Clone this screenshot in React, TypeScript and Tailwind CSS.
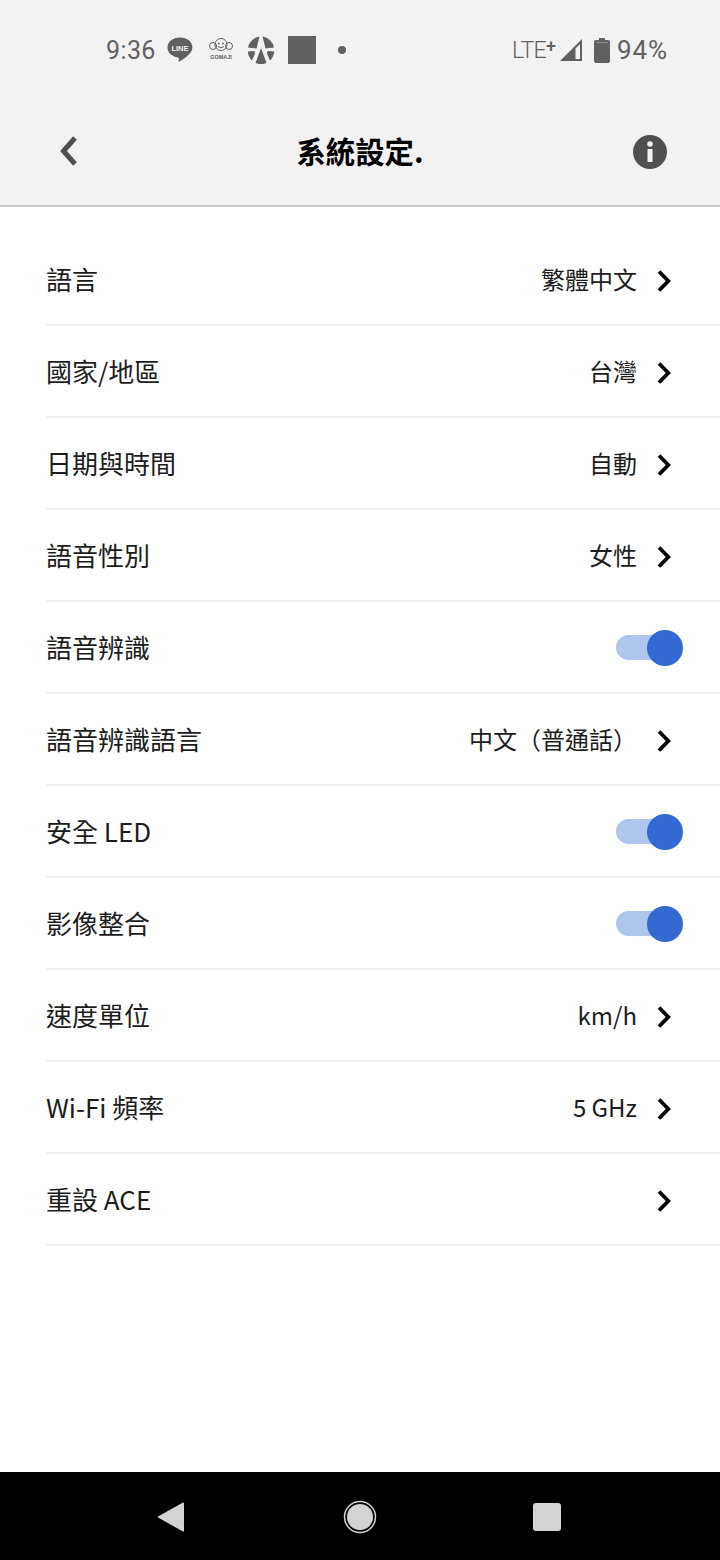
import React from 'react';

const cjk = 'font-["Noto_Sans_CJK_TC",sans-serif]';

type Row = { label: string; value?: string; toggle?: boolean };

const rows: Row[] = [
  { label: '語言', value: '繁體中文' },
  { label: '國家/地區', value: '台灣' },
  { label: '日期與時間', value: '自動' },
  { label: '語音性別', value: '女性' },
  { label: '語音辨識', toggle: true },
  { label: '語音辨識語言', value: '中文（普通話）' },
  { label: '安全 LED', toggle: true },
  { label: '影像整合', toggle: true },
  { label: '速度單位', value: 'km/h' },
  { label: 'Wi-Fi 頻率', value: '5 GHz' },
  { label: '重設 ACE', value: '' },
];

const Chevron = () => (
  <svg width="16" height="24" viewBox="0 0 16 24" className="ml-[19px] shrink-0">
    <path d="M3 2.500 L12.300 12 L3 21.500" fill="none" stroke="#000" strokeWidth="3.800" />
  </svg>
);

const Toggle = () => (
  <div className="relative w-[68px] h-[36px] mr-[37px]">
    <div className="absolute left-[1px] top-[5.5px] w-[59px] h-[25px] rounded-full bg-[#aec6ec]" />
    <div className="absolute right-0 top-0 w-[36px] h-[36px] rounded-full bg-[#3369d1]" />
  </div>
);

const StatusBar = () => (
  <div className='h-[100px] flex items-start pt-[33px] pl-[106px] pr-[52px] justify-between text-[#616161] font-["Roboto",sans-serif]'>
    <div className="flex items-center h-[34px]">
      <span className="text-[25px] leading-none tracking-[0.4px]">9:36</span>
      {/* LINE */}
      <svg width="28" height="28" viewBox="0 0 28 28" className="ml-[10px]">
        <path d="M14 1.5C6.8 1.5 1.5 5.7 1.5 11.5c0 5.2 4.4 9.2 10.5 9.9.8.2 1 .6.8 1.4l-.3 2.2c0 .5.4.9 1 .5 3-1.8 12.9-7.4 12.9-14C26.500 5.700 21.200 1.500 14 1.500Z" fill="#616161" />
        <text x="14" y="14.500" textAnchor="middle" fontSize="7.500" fontWeight="700" fill="#f2f2f2" fontFamily="Liberation Sans">LINE</text>
      </svg>
      {/* GOMAJI */}
      <svg width="26" height="28" viewBox="0 0 26 28" className="ml-[14px]">
        <g fill="none" stroke="#616161" strokeWidth="1">
          <circle cx="13" cy="8.500" r="6" />
          <circle cx="5" cy="10" r="3.500" />
          <circle cx="21" cy="10" r="3.500" />
        </g>
        <circle cx="11" cy="7.500" r="0.900" fill="#616161" />
        <circle cx="15" cy="7.500" r="0.900" fill="#616161" />
        <path d="M10 10.500q3 2.500 6 0" fill="none" stroke="#616161" strokeWidth="1" />
        <text x="13" y="23" textAnchor="middle" fontSize="5.500" fontWeight="700" fill="#616161" fontFamily="Liberation Sans">GOMAJI</text>
      </svg>
      {/* round logo */}
      <svg width="28" height="28" viewBox="0 0 28 28" className="ml-[13px]">
        <path d="M12.500 .6A13.500 13.500 0 0 0 1 11.500L9.500 12.500ZM15.500 .6A13.500 13.500 0 0 1 27 11.500L18.500 12.500ZM.8 15.500 7.500 15 8 17.500 5 24.500A13.500 13.500 0 0 1 .8 15.500ZM27.200 15.500 20.500 15 20 17.500 23 24.500A13.500 13.500 0 0 0 27.200 15.500ZM14 12 8.500 27A13.500 13.500 0 0 0 19.500 27Z" fill="#616161" />
      </svg>
      <div className="ml-[13px] w-[28px] h-[28px] bg-[#616161]" />
      <div className="ml-[22px] w-[8px] h-[8px] rounded-full bg-[#616161]" />
    </div>
    <div className="flex items-center h-[34px]">
      <span className="text-[23px] leading-none tracking-[-0.6px] font-light">LTE</span>
      <span className="text-[18px] leading-none font-medium mb-[8px]">+</span>
      <svg width="24" height="24" viewBox="0 0 24 24" className="ml-[3px]">
        <path d="M1 23 23 1V23ZM16.500 21H21V6L16.500 10.500Z" fill="#616161" fillRule="evenodd" />
      </svg>
      <svg width="16" height="25" viewBox="0 0 16 25" className="ml-[11px]">
        <path d="M5 0h6v2h3a2 2 0 0 1 2 2v19a2 2 0 0 1-2 2H2a2 2 0 0 1-2-2V4a2 2 0 0 1 2-2h3Z" fill="#616161" />
        <rect x="2" y="4" width="12" height="1" fill="#8a8a8a" />
      </svg>
      <span className="ml-[7px] text-[26px] leading-none tracking-[0.9px]">94%</span>
    </div>
  </div>
);

const Header = () => (
  <div className="relative h-[107px] bg-[#f2f2f2] border-b-2 border-[#c9c9c9] flex justify-center pt-[28px]">
    <svg width="22" height="30" viewBox="0 0 22 30" className="absolute left-[57px] top-[36px]">
      <path d="M18 2 6.500 15 18 28" fill="none" stroke="#4f4f4f" strokeWidth="5" />
    </svg>
    <span className="text-[29.4px] leading-[44px] font-bold text-black">系統設定.</span>
    <svg width="34" height="34" viewBox="0 0 34 34" className="absolute left-[633px] top-[35px]">
      <circle cx="17" cy="17" r="17" fill="#505050" />
      <rect x="14.500" y="14" width="5" height="13" fill="#f2f2f2" />
      <circle cx="17" cy="9" r="2.800" fill="#f2f2f2" />
    </svg>
  </div>
);

const SettingRow = ({ row }: { row: Row }) => (
  <div className="h-[92px] border-b-2 border-[#f1f1f1] flex items-center justify-between">
    <span className="text-[26px] leading-none text-[#1c1c1c]">{row.label}</span>
    {row.toggle ? (
      <div className="pt-[1px]">
        <Toggle />
      </div>
    ) : (
      <div className="flex items-center pr-[48px] pt-[4px]">
        <span className="text-[24px] leading-none text-[#1c1c1c] mb-[4px]">{row.value}</span>
        <Chevron />
      </div>
    )}
  </div>
);

const NavBar = () => (
  <div className="h-[88px] bg-black relative flex items-center">
    <svg width="28" height="32" viewBox="0 0 28 32" className="absolute left-[157px] top-[29px]">
      <path d="M26 1.500Q27 1 27 2.500V29.500Q27 31 26 30.500L1 16.500Q.5 16 1 15.500Z" fill="#d3d3d3" />
    </svg>
    <svg width="34" height="34" viewBox="0 0 34 34" className="absolute left-[343px] top-[28px]">
      <circle cx="17" cy="17" r="15.500" fill="none" stroke="#d3d3d3" strokeWidth="1.500" />
      <circle cx="17" cy="17" r="13" fill="#d3d3d3" />
    </svg>
    <div className="absolute left-[533px] top-[31px] w-[28px] h-[28px] rounded-[3px] bg-[#d3d3d3]" />
  </div>
);

export default function App() {
  return (
    <div className={`w-[720px] h-[1560px] bg-white flex flex-col overflow-hidden ${cjk}`}>
      <div className="bg-[#f2f2f2]">
        <StatusBar />
      </div>
      <Header />
      <div className="flex-1 pt-[27px] pl-[46px]">
        {rows.map((r) => (
          <SettingRow key={r.label} row={r} />
        ))}
      </div>
      <NavBar />
    </div>
  );
}
